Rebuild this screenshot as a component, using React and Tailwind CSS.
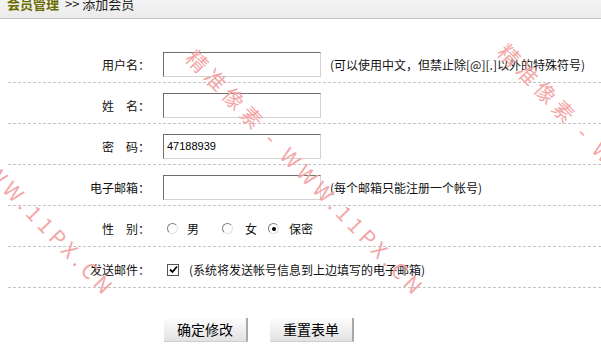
import React from "react";

const cjk = { fontFamily: '"Noto Sans CJK SC", "Liberation Sans", sans-serif' };

const Field = ({ value }) => (
  <div className="w-[158px] h-[25px] border border-t-[#6f6f6f] border-l-[#6f6f6f] border-r-[#d2d2d2] border-b-[#d2d2d2] bg-white flex items-center px-[3px] text-[11px] text-black" style={{ fontFamily: '"Liberation Sans", sans-serif' }}>
    {value}
  </div>
);

const Row = ({ label, children }) => (
  <div className="flex items-center pt-[10px] pb-[5px] h-[41px] border-b border-dashed border-[#c4c4c4]">
    <div className="w-[142px] text-right text-[12px] text-[#111] leading-none">{label}</div>
    <div className="ml-[13px] flex items-center h-[25px]">{children}</div>
  </div>
);

const Radio = ({ checked }) => (
  <span className="w-[11px] h-[11px] rounded-full border border-t-[#808080] border-l-[#808080] border-r-[#e0e0e0] border-b-[#e0e0e0] bg-white flex items-center justify-center">
    {checked && <span className="w-[4px] h-[4px] rounded-full bg-black" />}
  </span>
);

const Watermark = ({ className }) => (
  <div className={`absolute origin-top-left rotate-[46deg] whitespace-nowrap text-[21px] leading-none tracking-[5px] text-[#f3a6a6] pointer-events-none ${className}`}>
    精准像素 - WWW.11PX.CN
  </div>
);

export default function App() {
  return (
    <div className="relative w-[601px] h-[344px] bg-white overflow-hidden" style={cjk}>
      {/* 顶部导航 */}
      <div className="h-[19px] border-b border-[#c4c4c4] bg-gradient-to-b from-[#f4f4f4] to-[#ebebeb] pl-[7px] text-[13px] leading-[8px] overflow-hidden whitespace-nowrap">
        <span className="font-bold text-[#6b6b00]">会员管理</span>
        <span className="ml-[6px] text-[#222]">&gt;&gt; 添加会员</span>
      </div>

      <div className="ml-[8px] mt-[23px]">
        <Row label="用户名：">
          <Field />
          <span className="ml-[9px] text-[12px] text-[#111]">(可以使用中文，但禁止除[@][.]以外的特殊符号)</span>
        </Row>
        <Row label="姓　名：">
          <Field />
        </Row>
        <Row label="密　码：">
          <Field value="47188939" />
        </Row>
        <Row label="电子邮箱：">
          <Field />
          <span className="ml-[9px] text-[12px] text-[#111]">(每个邮箱只能注册一个帐号)</span>
        </Row>
        <Row label="性　别：">
          <div className="flex items-center text-[12px] text-[#111] ml-[4px]">
            <Radio />
            <span className="ml-[9px]">男</span>
            <span className="ml-[23px]"><Radio /></span>
            <span className="ml-[12px]">女</span>
            <span className="ml-[11px]"><Radio checked /></span>
            <span className="ml-[10px]">保密</span>
          </div>
        </Row>
        <Row label="发送邮件：">
          <div className="flex items-center ml-[4px] text-[12px] text-[#111]">
            <span className="w-[12px] h-[12px] border border-[#555] bg-white flex items-center justify-center">
              <svg width="9" height="9" viewBox="0 0 9 9">
                <path d="M1 4.5 L3.5 7 L8 1.5" stroke="#000" strokeWidth="1.8" fill="none" />
              </svg>
            </span>
            <span className="ml-[10px]">(系统将发送帐号信息到上边填写的电子邮箱)</span>
          </div>
        </Row>

        <div className="flex ml-[156px] mt-[30px] gap-[22px]">
          <button className="w-[84px] h-[24px] bg-gradient-to-b from-[#fdfdfd] to-[#e2e2e2] border-r-2 border-b border-r-[#a9a9a9] border-b-[#cfcfcf] text-[14px] text-black">
            确定修改
          </button>
          <button className="w-[84px] h-[24px] bg-gradient-to-b from-[#fdfdfd] to-[#e2e2e2] border-r-2 border-b border-r-[#a9a9a9] border-b-[#cfcfcf] text-[14px] text-black">
            重置表单
          </button>
        </div>
      </div>

      <Watermark className="left-[-112px] top-[46px]" />
      <Watermark className="left-[198px] top-[46px]" />
      <Watermark className="left-[510px] top-[40px]" />
    </div>
  );
}
